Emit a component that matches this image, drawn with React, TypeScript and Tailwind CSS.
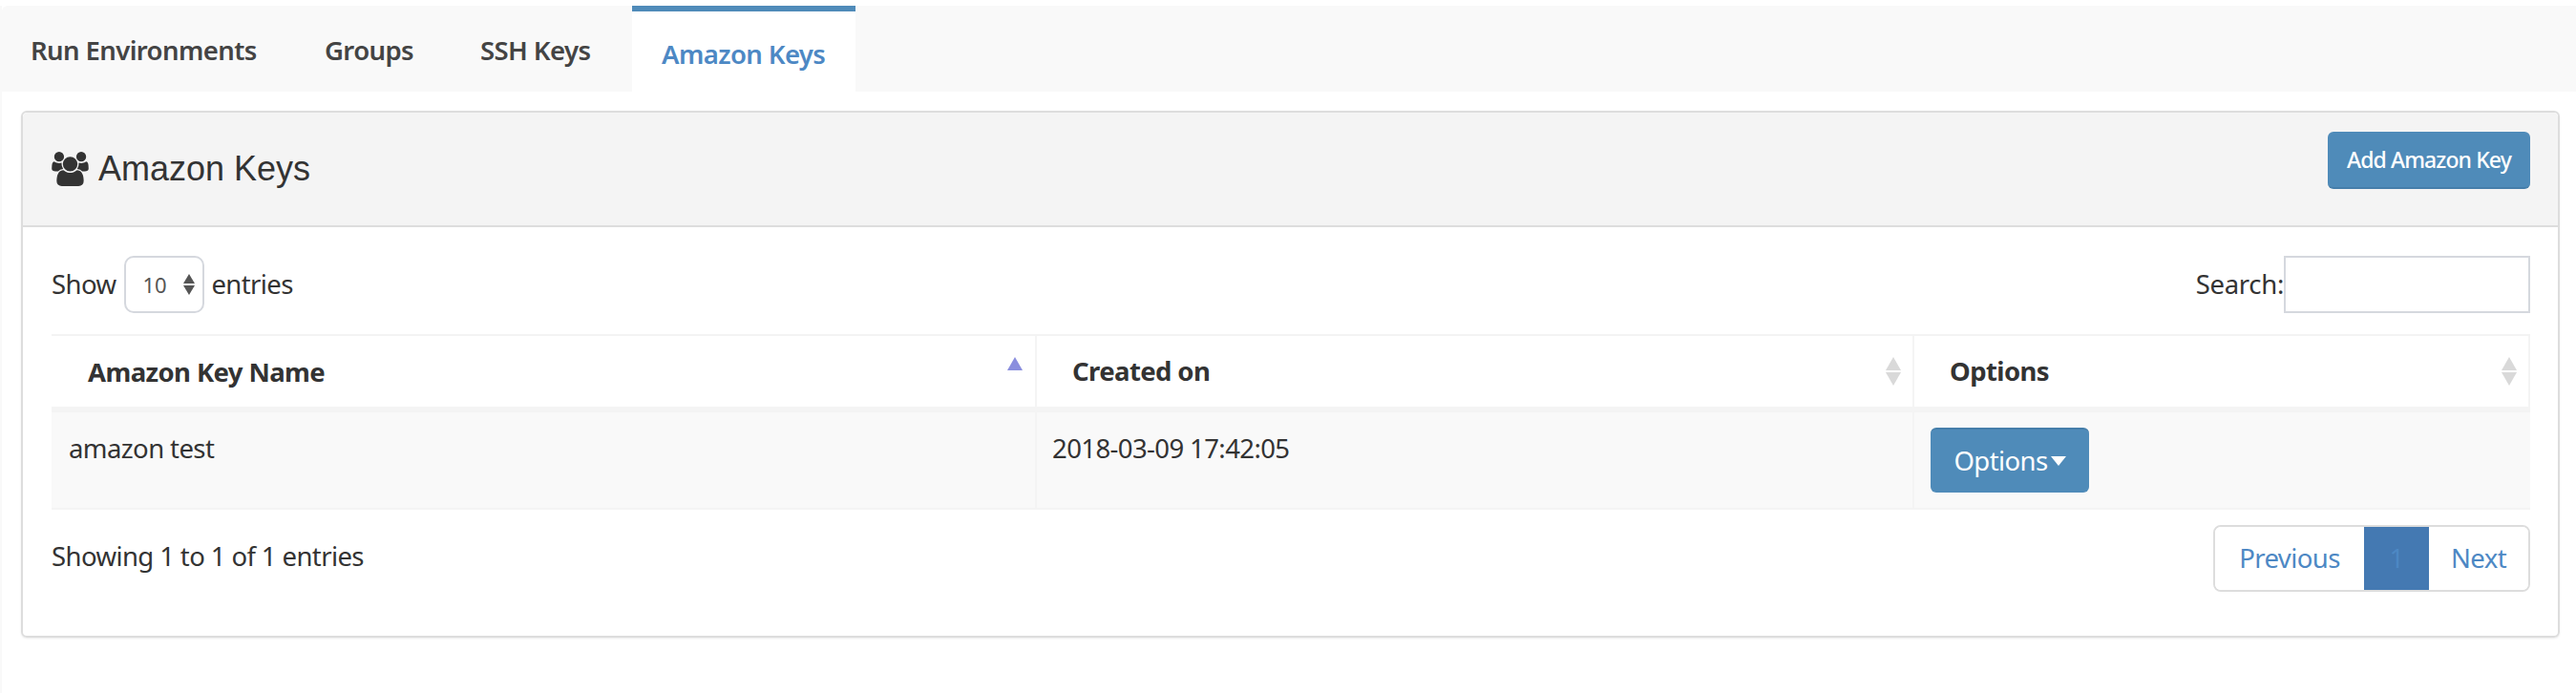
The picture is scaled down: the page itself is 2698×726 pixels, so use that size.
const body = "font-['Noto_Sans',sans-serif]";

const Caret = ({ up, className }: { up?: boolean; className: string }) => (
  <svg width="16" height="14" viewBox="0 0 16 14" className={className}>
    <path d={up ? "M8 0L16 14H0Z" : "M8 14L0 0H16Z"} fill="currentColor" />
  </svg>
);

const SortIcon = () => (
  <div className="flex flex-col gap-[2px] text-[#d9d9d9]">
    <Caret up className="block" />
    <Caret className="block" />
  </div>
);

const UsersIcon = () => (
  <svg width="39" height="36" viewBox="0 0 1920 1792" className="text-[#333333]">
    <path
      fill="currentColor"
      d="M593 896q-162 5-265 128h-134q-82 0-138-40.5t-56-118.5q0-353 124-353 6 0 43.5 21t97.5 42.5 119 21.5q67 0 133-23-5 37-5 66 0 139 81 256zm1071 637q0 120-73 189.5t-194 69.5h-874q-121 0-194-69.5t-73-189.5q0-53 3.5-103.5t14-109 26.5-108.5 43-97.5 62-81 85.5-53.5 111.5-20q10 0 43 21.5t73 48 107 48 135 21.5 135-21.5 107-48 73-48 43-21.5q61 0 111.5 20t85.5 53.5 62 81 43 97.5 26.5 108.5 14 109 3.5 103.5zm-1024-1277q0 106-75 181t-181 75-181-75-75-181 75-181 181-75 181 75 75 181zm704 384q0 159-112.5 271.5t-271.5 112.5-271.5-112.5-112.5-271.5 112.5-271.5 271.5-112.5 271.5 112.5 112.5 271.5zm576 225q0 78-56 118.5t-138 40.5h-134q-103-123-265-128 81-117 81-256 0-29-5-66 66 23 133 23 59 0 119-21.5t97.5-42.5 43.5-21q124 0 124 353zm-128-609q0 106-75 181t-181 75-181-75-75-181 75-181 181-75 181 75 75 181z"
    />
  </svg>
);

const tabs = [
  { label: "Run Environments", width: "w-[308px]" },
  { label: "Groups", width: "w-[163px]" },
  { label: "SSH Keys", width: "w-[159px]" },
];

export default function App() {
  return (
    <div className={`${body} h-[726px] w-[2698px] overflow-hidden bg-white pt-[6px] text-[27.5px] tracking-[-0.6px] text-[#333333]`}>
      <div className="h-full border-l-[2px] border-[#f9f9f9]">
        {/* Tabs */}
        <div className="flex h-[90px] rounded-tl-[6px] bg-[#f9f9f9]">
          <div className="flex pl-[30px]">
            {tabs.map((t) => (
              <a key={t.label} className={`${t.width} pt-[29px] font-semibold leading-[36px] text-[#444444]`}>
                {t.label}
              </a>
            ))}
          </div>
          <a className="h-[91px] w-[234px] border-t-[6px] border-[#4f8bb9] bg-white pl-[31px] pt-[27px] font-semibold leading-[36px] text-[#4d88c4]">
            Amazon Keys
          </a>
        </div>

        {/* Panel */}
        <div className="ml-[20px] mt-[20px] h-[552px] w-[2659px] rounded-[6px] border-2 border-[#dddddd] shadow-[0_1px_2px_rgba(0,0,0,0.08)]">
          <div className="flex h-[120px] items-center justify-between rounded-t-[5px] border-b-2 border-[#dddddd] bg-[#f4f4f4] pl-[30px] pr-[29px]">
            <div className="flex items-center gap-[10px]">
              <UsersIcon />
              <span className="font-['Liberation_Sans',sans-serif] text-[36px] leading-[40px] tracking-normal text-[#333333]">Amazon Keys</span>
            </div>
            <button className="mb-[18px] h-[60px] w-[212px] rounded-[6px] border-b-2 border-[#457eaa] bg-[#4f8bb9] text-[23px] font-medium tracking-[-0.9px] text-white">
              Add Amazon Key
            </button>
          </div>

          <div className="pl-[30px] pr-[29px]">
            {/* Table controls */}
            <div className="flex h-[90px] items-center justify-between pt-[30px]">
              <div className="flex items-center">
                <span>Show</span>
                <div className="ml-[9px] mr-[7px] flex h-[60px] w-[84px] items-center justify-between rounded-[10px] border-2 border-[#d5d8de] pl-[17px] pr-[8px] text-[22px] tracking-normal text-[#555555]">
                  <span>10</span>
                  <div className="flex flex-col gap-[2px] text-[#555555]">
                    <svg width="12" height="10" viewBox="0 0 12 10"><path d="M6 0L12 10H0Z" fill="currentColor" /></svg>
                    <svg width="12" height="10" viewBox="0 0 12 10"><path d="M6 10L0 0H12Z" fill="currentColor" /></svg>
                  </div>
                </div>
                <span>entries</span>
              </div>
              <div className="flex items-center">
                <span className="tracking-[-0.3px]">Search:</span>
                <input className="h-[60px] w-[258px] border-2 border-[#d5d8de] bg-white" />
              </div>
            </div>

            {/* Table */}
            <div className="mt-[22px] border-t-2 border-[#f3f3f3] text-[#333333]">
              <div className="grid h-[80px] grid-cols-[1032px_919px_645px] border-b-[6px] border-[#f4f4f4] font-bold">
                <div className="flex items-start justify-between border-r-[2px] border-[#f4f4f4] pl-[38px] pr-[13px]">
                  <span className="pt-[17px]">Amazon Key Name</span>
                  <Caret up className="mt-[22px] text-[#8a8ede]" />
                </div>
                <div className="flex items-center justify-between border-r-[2px] border-[#f4f4f4] pl-[37px] pr-[12px]">
                  <span>Created on</span>
                  <SortIcon />
                </div>
                <div className="flex items-center justify-between border-r-[2px] border-[#f4f4f4] pl-[37px] pr-[12px]">
                  <span>Options</span>
                  <SortIcon />
                </div>
              </div>
              <div className="grid h-[102px] grid-cols-[1032px_919px_645px] border-b-[2px] border-[#f4f4f4] bg-[#f9f9f9]">
                <div className="border-r-[2px] border-[#f4f4f4] pl-[18px] pt-[20px] leading-[36px]">amazon test</div>
                <div className="border-r-[2px] border-[#f4f4f4] pl-[16px] pt-[20px] leading-[36px]">2018-03-09 17:42:05</div>
                <div className="pl-[17px] pt-[16px]">
                  <button className="flex h-[68px] w-[166px] items-center justify-center gap-[3px] rounded-[6px] border-t-2 border-[#457eaa] bg-[#4f8bb9] text-white">
                    Options
                    <svg width="16" height="10" viewBox="0 0 16 10"><path d="M8 10L0 0H16Z" fill="currentColor" /></svg>
                  </button>
                </div>
              </div>
            </div>

            {/* Footer */}
            <div className="mt-[16px] flex items-start justify-between">
              <span className="pt-[15px] leading-[36px]">Showing 1 to 1 of 1 entries</span>
              <div className="flex h-[70px] overflow-hidden rounded-[8px] border-2 border-[#dddddd] text-[#4d88c4]">
                <a className="flex w-[156px] items-center justify-center bg-white">Previous</a>
                <a className="-my-[2px] flex w-[68px] items-center justify-center bg-[#4479b2] text-[#4d88c4]">1</a>
                <a className="flex w-[104px] items-center justify-center bg-white">Next</a>
              </div>
            </div>
          </div>
        </div>
      </div>
    </div>
  );
}
